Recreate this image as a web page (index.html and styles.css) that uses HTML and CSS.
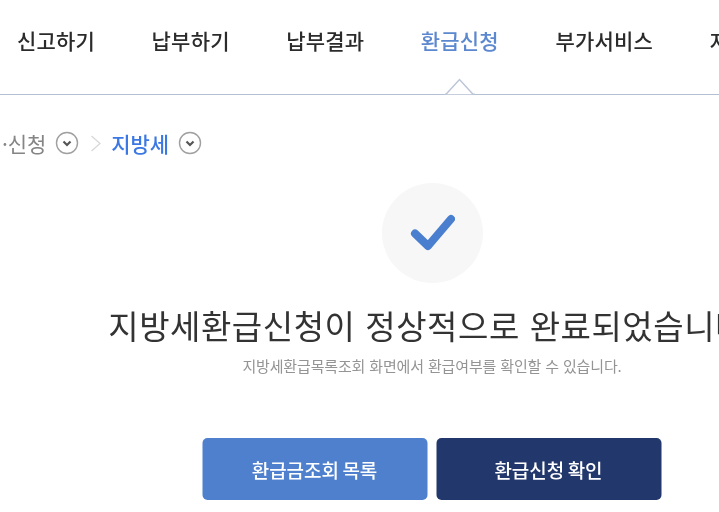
FILE: index.html
```html
<!DOCTYPE html>
<html lang="ko">
<head>
<meta charset="utf-8">
<title>지방세 환급신청 완료</title>
<link rel="stylesheet" href="styles.css">
</head>
<body>
<div class="page">
  <nav class="gnb">
    <a class="gnb-item">신고하기</a>
    <a class="gnb-item">납부하기</a>
    <a class="gnb-item">납부결과</a>
    <a class="gnb-item is-active">환급신청</a>
    <a class="gnb-item">부가서비스</a>
    <a class="gnb-item">지방세정보</a>
  </nav>
  <svg class="gnb-caret" width="30" height="17" viewBox="0 0 30 17" aria-hidden="true">
    <path d="M0 16.2H1L14.5 1.5L28 16.2H30" fill="#fff" stroke="#bcc6d8" stroke-width="1.5"/>
  </svg>
  <div class="crumbs">
    <span class="crumb">·신청</span>
    <svg class="crumb-toggle" width="24" height="24" viewBox="0 0 24 24" aria-hidden="true">
      <circle cx="12" cy="12" r="10.5" fill="none" stroke="#a0a0a0" stroke-width="1.4"/>
      <path d="M8.5 10.5L12 14L15.5 10.5" fill="none" stroke="#555" stroke-width="2.2"/>
    </svg>
    <svg class="crumb-sep" width="12" height="20" viewBox="0 0 12 20" aria-hidden="true">
      <path d="M1.5 3L10 10.5L1.5 18" fill="none" stroke="#d8d8d8" stroke-width="1.3"/>
    </svg>
    <strong class="crumb crumb-current">지방세</strong>
    <svg class="crumb-toggle" width="24" height="24" viewBox="0 0 24 24" aria-hidden="true">
      <circle cx="12" cy="12" r="10.5" fill="none" stroke="#a0a0a0" stroke-width="1.4"/>
      <path d="M8.5 10.5L12 14L15.5 10.5" fill="none" stroke="#555" stroke-width="2.2"/>
    </svg>
  </div>
  <main class="result">
    <div class="result-icon">
      <svg width="46" height="40" viewBox="0 0 46 40" aria-hidden="true">
        <path d="M6 20.5L19 33L42 6" fill="none" stroke="#4a7ecf" stroke-width="8" stroke-linecap="round" stroke-linejoin="round"/>
      </svg>
    </div>
    <h1 class="result-title">지방세환급신청이 정상적으로 완료되었습니다<span class="title-end">.</span></h1>
    <p class="result-desc">지방세환급목록조회 화면에서 환급여부를 확인할 수 있습니다.</p>
    <div class="actions">
      <button class="btn btn-light">환급금조회 목록</button>
      <button class="btn btn-dark">환급신청 확인</button>
    </div>
  </main>
</div>
</body>
</html>
```
FILE: styles.css
```css
* { box-sizing: border-box; }
html, body { margin: 0; height: 100%; overflow: hidden; background: #fff; }
body { font-family: "Noto Sans CJK KR", "Noto Sans", sans-serif; color: #333; }
.page { width: 864px; height: 512px; position: relative; filter: blur(0.5px); }
.gnb {
  display: flex; gap: 56.5px; height: 95px; padding: 21px 0 0 17px;
  border-bottom: 1.5px solid #b4bfd4; font-size: 21px; letter-spacing: 0.2px; line-height: 38px; font-weight: 500;
}
.gnb-item { color: #2b2b2b; white-space: nowrap; }
.gnb-item.is-active { color: #5b88cf; }
.gnb-caret { position: absolute; left: 445px; top: 78px; }
.crumbs { display: flex; align-items: center; height: 30px; margin-top: 33px; padding-left: 2px; font-size: 21px; letter-spacing: -0.1px; }
.crumb { color: #858585; }
.crumb-current { color: #3b78e3; font-weight: 500; }
.crumb-toggle { margin-left: 9px; flex: none; }
.crumb-sep { margin: 0 9px 0 11px; flex: none; }
.result { display: flex; flex-direction: column; align-items: center; margin-top: 25px; }
.result-icon { width: 101px; height: 100px; border-radius: 50%; background: #f7f7f8; display: flex; align-items: center; justify-content: center; }
.result-title { margin: 19px 0 0 3px; font-size: 33px; font-weight: 400; line-height: 46px; letter-spacing: 0.55px; color: #333; white-space: nowrap; }
.title-end { margin-left: 3px; }
.result-desc { margin: 7px 0 0; font-size: 15px; line-height: 22px; letter-spacing: -0.15px; color: #949494; }
.actions { display: flex; gap: 9px; margin-top: 61px; transform: translateX(-0.5px); }
.btn { width: 225px; height: 62px; border: 0; border-radius: 5px; color: #fff; font: 500 19px "Noto Sans CJK KR", sans-serif; letter-spacing: 0; word-spacing: -2px; }
.btn-light { background: #4f80ce; }
.btn-dark { background: #22376c; }
```
